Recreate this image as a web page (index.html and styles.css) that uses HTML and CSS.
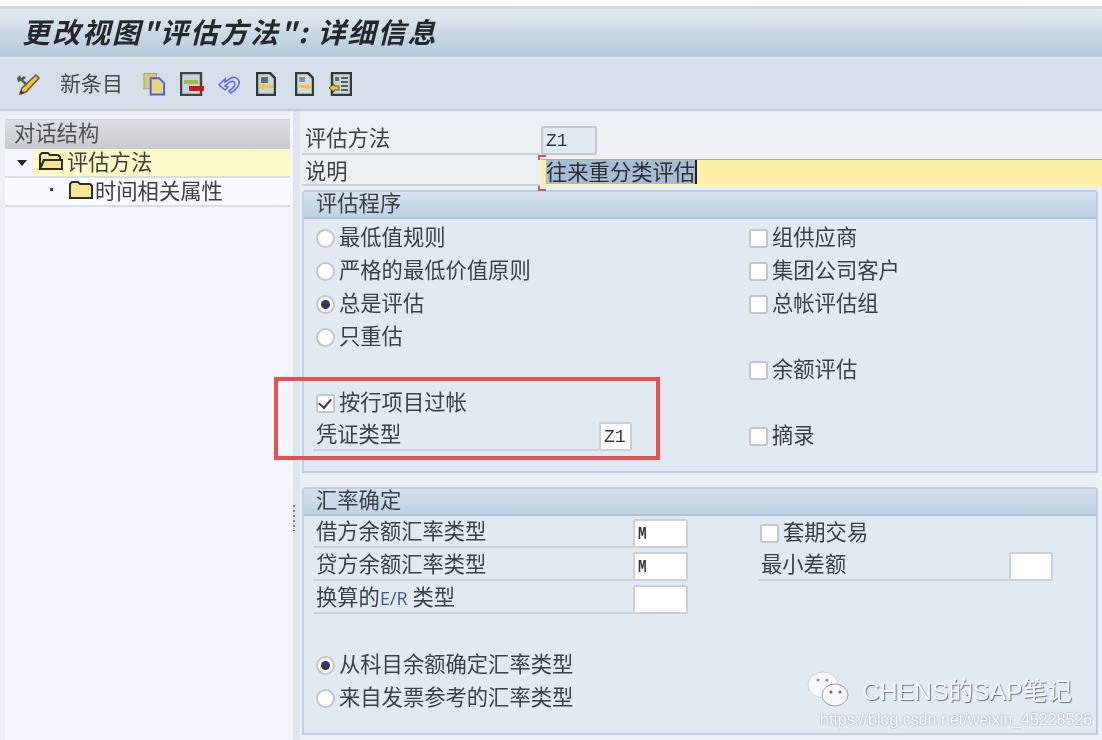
FILE: index.html
```html
<!DOCTYPE html>
<html>

	<head>
		<meta charset="UTF-8">
		<title>更改视图"评估方法": 详细信息</title>
		<link rel="stylesheet" href="styles.css">
	</head>

	<body>
		<div id="main">
			<div class="title">更改视图"评估方法": 详细信息</div>
			<div class="toolbar">
				<svg class="tool tool-pen" viewBox="0 0 24 24">
					<path d="M1 6l3-3 1 3 3-2 2 2-3 2 4 3-2 2-4-4-3 1z" fill="#55595c"/>
					<path d="M20 3l3 3-13 14-6 2 2-6z" fill="#f2c14e" stroke="#6b5a2c" stroke-width="1.5"/>
					<path d="M4 22l1-4 3 3z" fill="#333"/>
				</svg>
				<span class="tool-text">新条目</span>
				<svg class="tool tool-copy" viewBox="0 0 24 24">
					<rect x="1" y="1" width="13" height="16" fill="#d8c878" stroke="#a8a070"/>
					<path d="M8 6h9l5 5v12H8z" fill="#e6d67c" stroke="#5a5ae6" stroke-width="2"/>
				</svg>
				<svg class="tool tool-save" viewBox="0 0 25 24">
					<rect x="1" y="1" width="20" height="22" fill="#ccd3d7" stroke="#3f4446" stroke-width="2.5"/>
					<rect x="4" y="8" width="14" height="4" fill="#9cc04c"/>
					<rect x="9" y="14" width="15" height="5" rx="1" fill="#c8161c"/>
				</svg>
				<svg class="tool tool-undo" viewBox="0 0 24 24">
					<path d="M2 13l6-6v3l6-4c5-2 9 2 8 6-1 4-4 6-8 9l-2-2c3-2 6-4 6-7 0-3-3-3-5-2l-5 4 3 1-3 3z" fill="#dfe3f5" stroke="#6a6ad8" stroke-width="1.6"/>
				</svg>
				<svg class="tool tool-doc" viewBox="0 0 20 24">
					<path d="M1 1h13l5 5v17H1z" fill="#cdd3d6" stroke="#33383a" stroke-width="2.5"/>
					<path d="M5 5h7v6H5z" fill="#62696d"/>
					<path d="M2 15l6-4v2h9v3H8v2z" fill="#e8c93c"/>
				</svg>
				<svg class="tool tool-doc2" viewBox="0 0 19 24">
					<path d="M1 1h12l5 5v17H1z" fill="#d5dade" stroke="#33383a" stroke-width="2.5"/>
					<path d="M4 5h6v5H4z" fill="#8a9296"/>
					<path d="M17 15l-6-4v2H4v3h7v2z" fill="#e8c93c"/>
				</svg>
				<svg class="tool tool-list" viewBox="0 0 23 24">
					<rect x="3" y="1" width="19" height="22" fill="#cdd3d6" stroke="#33383a" stroke-width="2.5"/>
					<path d="M12 6h7M12 10h7M12 14h7M12 18h7" stroke="#5a6064" stroke-width="2"/>
					<rect x="6" y="5" width="4" height="4" fill="#62696d"/>
					<path d="M0 16l5-4v2h5v4H5v2z" fill="#e8c93c" stroke="#5c5420"/>
				</svg>
			</div>
			<div class="content">
				<div class="side">
					<div class="side-head">对话结构</div>
					<div class="tree-row tree-open">
						<span class="tree-arrow"></span>
						<span class="tree-sel">
							<svg class="folder" viewBox="0 0 25 20">
								<path d="M2 18V4l2-2h6l2 2h8l2 2v3H6l-4 9z" fill="#f8eeb0" stroke="#2f2f2a" stroke-width="2"/>
								<path d="M2 18l4-9h18v9z" fill="#f6e48c" stroke="#2f2f2a" stroke-width="2"/>
							</svg>
							评估方法
						</span>
					</div>
					<div class="tree-row tree-child">
						<span class="tree-dot"></span>
						<svg class="folder" viewBox="0 0 25 20">
							<path d="M2 18V4l2-2h6l2 2h10l2 2v12z" fill="#f7e795" stroke="#2f2f2a" stroke-width="2"/>
						</svg>
						时间相关属性
					</div>
				</div>
				<div class="splitter">
					<div class="grip"></div>
				</div>
				<div class="detail">
					<div class="field-line line-code">
						<div class="line-label">评估方法</div>
						<div class="input input-code">Z1</div>
					</div>
					<div class="field-line line-desc">
						<div class="line-label">说明</div>
						<div class="input-desc">
							<span class="corner corner-top"></span>
							<span class="selected">往来重分类评估</span>
							<span class="corner corner-bottom"></span>
						</div>
					</div>

					<div class="group group-one">
						<div class="group-head">评估程序</div>
						<div class="group-body">
							<div class="col-left">
								<div class="row"><span class="radio"></span>最低值规则</div>
								<div class="row"><span class="radio"></span>严格的最低价值原则</div>
								<div class="row"><span class="radio on"></span>总是评估</div>
								<div class="row"><span class="radio"></span>只重估</div>
								<div class="row"></div>
								<div class="row"><span class="check on"></span>按行项目过帐</div>
								<div class="row line">
									<div class="line-label">凭证类型</div>
									<div class="input input-mono w33">Z1</div>
								</div>
							</div>
							<div class="col-right">
								<div class="row"><span class="check"></span>组供应商</div>
								<div class="row"><span class="check"></span>集团公司客户</div>
								<div class="row"><span class="check"></span>总帐评估组</div>
								<div class="row"></div>
								<div class="row"><span class="check"></span>余额评估</div>
								<div class="row"></div>
								<div class="row"><span class="check"></span>摘录</div>
							</div>
						</div>
					</div>

					<div class="group group-two">
						<div class="group-head">汇率确定</div>
						<div class="group-body">
							<div class="col-left">
								<div class="row line">
									<div class="line-label">借方余额汇率类型</div>
									<div class="input input-mono w55"><b>M</b></div>
								</div>
								<div class="row line">
									<div class="line-label">贷方余额汇率类型</div>
									<div class="input input-mono w55"><b>M</b></div>
								</div>
								<div class="row line">
									<div class="line-label">换算的<span class="latin">E/R</span> 类型</div>
									<div class="input input-mono w55"></div>
								</div>
								<div class="row"></div>
								<div class="row"><span class="radio on"></span>从科目余额确定汇率类型</div>
								<div class="row"><span class="radio"></span>来自发票参考的汇率类型</div>
							</div>
							<div class="col-right">
								<div class="row"><span class="check"></span>套期交易</div>
								<div class="row line">
									<div class="line-label">最小差额</div>
									<div class="input input-mono w44"></div>
								</div>
							</div>
						</div>
					</div>
				</div>
			</div>
			<div class="red-box"></div>
			<div class="mark">
				<svg class="mark-icon" viewBox="0 0 42 38">
					<ellipse cx="16" cy="15" rx="15" ry="13" fill="#f7f9fc" stroke="#d0d5da"/>
					<ellipse cx="28" cy="25" rx="13" ry="11" fill="#f7f9fc" stroke="#9aa0a8"/>
					<circle cx="11" cy="10" r="1.6" fill="#8f969e"/>
					<circle cx="20" cy="10" r="1.6" fill="#8f969e"/>
					<circle cx="24" cy="22" r="1.5" fill="#666c74"/>
					<circle cx="33" cy="22" r="1.5" fill="#666c74"/>
				</svg>
				<span class="mark-text">CHENS的SAP笔记</span>
			</div>
			<div class="url">https://blog.csdn.net/weixin_45228526</div>
		</div>
	</body>

</html>
```

FILE: styles.css
```css
html, body {
	margin: 0;
	background-color: #fff;
}

#main {
	position: relative;
	width: 1102px;
	height: 740px;
	overflow: hidden;
	padding-top: 6px;
	box-sizing: border-box;
	background: #fff;
	color: #3c4145;
	font-family: "Noto Sans CJK SC", "Liberation Sans", sans-serif;
	font-size: 21.3px;
	filter: blur(.7px);
}

.title {
	height: 51px;
	line-height: 45px;
	box-sizing: border-box;
	padding-left: 22px;
	border-top: 3px solid #cfd8e1;
	background: linear-gradient(#e3ebf2, #b5c8da);
	color: #24282c;
	font-size: 28px;
	font-weight: bold;
	font-style: italic;
	letter-spacing: 2px;
}

.toolbar {
	display: flex;
	align-items: center;
	height: 54px;
	box-sizing: border-box;
	padding-left: 16px;
	background: #d4dfe9;
	border-top: 1px solid #e4ebf1;
	border-bottom: 2px solid #bfcbd6;
}

.tool {
	height: 24px;
	flex: none;
}

.tool-pen { width: 24px; }
.tool-text { margin-left: 20px; width: 63px; padding-bottom: 3px; font-size: 21px; white-space: nowrap; color: #44494d; }
.tool-copy { width: 23px; margin-left: 20px; }
.tool-save { width: 25px; margin-left: 14px; }
.tool-undo { width: 24px; margin-left: 12px; }
.tool-doc { width: 20px; margin-left: 15px; }
.tool-doc2 { width: 19px; margin-left: 19px; }
.tool-list { width: 23px; margin-left: 15px; }

.content {
	display: flex;
	height: 629px;
	background: #ebf0f5;
}

.side {
	width: 285px;
	margin: 8px 0 0 5px;
	background: #f3f6fc;
}

.side-head {
	height: 30px;
	line-height: 24px;
	padding-left: 9px;
	box-sizing: border-box;
	background: linear-gradient(#dcdfe2, #c6cbcf);
	border-top: 1px solid #d0d4d8;
	color: #4c5155;
}

.tree-row {
	display: flex;
	align-items: center;
	height: 29px;
	box-sizing: border-box;
	border-bottom: 2px solid #d6dfe8;
	white-space: nowrap;
}

.tree-open {
	padding-left: 12px;
}

.tree-arrow {
	width: 0;
	height: 0;
	border: 5px solid transparent;
	border-top: 6px solid #222;
	border-bottom: 0;
	flex: none;
}

.tree-sel {
	display: flex;
	align-items: center;
	flex: 1;
	height: 100%;
	box-sizing: border-box;
	margin-left: 6px;
	padding: 0 0 4px 5px;
	background: #fdfac8;
}

.tree-child {
	padding: 0 0 4px 45px;
	background: #fafbfe;
}

.tree-dot {
	width: 3px;
	height: 3px;
	background: #444;
	flex: none;
}

.tree-child .folder {
	margin: 0 2px 0 15px;
}

.folder {
	width: 25px;
	height: 20px;
	margin-right: 4px;
	flex: none;
}

.splitter {
	position: relative;
	width: 10px;
	background: linear-gradient(90deg, #f3f6fc 30%, #dfe5ec 30%);
}

.grip {
	position: absolute;
	left: 3px;
	top: 394px;
	width: 2px;
	height: 26px;
	background: repeating-linear-gradient(#7d8388 0 2px, transparent 2px 5px);
}

.detail {
	flex: 1;
	padding: 14px 4px 0 2px;
}

.field-line {
	display: flex;
	align-items: flex-end;
}

.line-code {
	height: 30px;
}

.line-desc {
	height: 31px;
}

.line-label {
	flex: 1;
	min-width: 0;
	height: 100%;
	box-sizing: border-box;
	padding-left: 3px;
	border-bottom: 2px solid #cdd1d5;
	line-height: 26px;
	white-space: nowrap;
}

.field-line .line-label {
	flex: none;
	width: 238px;
}

.line-code .line-label {
	line-height: 23px;
}

.line-desc .line-label {
	line-height: 30px;
}

.input {
	flex: none;
	height: 29px;
	box-sizing: border-box;
	border: 2px solid #ccd0d3;
	border-radius: 2px;
	background: #fff;
	font-family: "Liberation Mono", monospace;
	font-size: 18px;
	line-height: 27px;
	padding-left: 3px;
	color: #33373a;
	overflow: hidden;
}

.input b {
	display: inline-block;
	transform: scaleX(.8);
	transform-origin: left;
}

.input-code {
	width: 56px;
	margin-left: 1px;
	background: #e1eaf3;
	border-color: #c4c9cc;
}

.input-desc {
	position: relative;
	display: flex;
	align-items: flex-start;
	flex: 1;
	height: 27px;
	margin-left: 1px;
	padding-left: 5px;
	margin-right: -4px;
	background: #fdf0a8;
	border-top: 1px solid #b2ad8c;
	box-sizing: border-box;
	white-space: nowrap;
}

.selected {
	height: 24px;
	line-height: 22px;
	background: #a8bbd3;
	border-right: 2px solid #222;
	color: #2a2f36;
}

.corner {
	position: absolute;
	left: -3px;
	width: 8px;
	height: 5px;
	border-left: 2px solid #d6524a;
	box-sizing: border-box;
}

.corner-top {
	top: -5px;
	border-top: 2px solid #d6524a;
}

.corner-bottom {
	bottom: -5px;
	border-bottom: 2px solid #d6524a;
}

.group {
	margin-top: 4px;
	border: 2px solid #bccfe2;
	border-radius: 4px 4px 0 0;
	background: #e1eaf3;
	box-sizing: border-box;
}

.group-one {
	height: 283px;
}

.group-two {
	height: 248px;
	margin-top: 14px;
}

.group-head {
	height: 27px;
	line-height: 19px;
	padding-left: 12px;
	box-sizing: border-box;
	background: linear-gradient(#d6e2ee, #bfd1e3);
	border-bottom: 2px solid #aec3d8;
}

.group-body {
	display: grid;
	padding: 3px 0 0 9px;
}

.group-one .group-body {
	grid-template-columns: 436px 1fr;
}

.group-two .group-body {
	grid-template-columns: 445px 1fr;
	padding-top: 1px;
}

.group-one .col-left {
	width: 319px;
}

.group-two .col-left {
	width: 375px;
}

.group-two .col-right {
	width: 295px;
}

.row {
	display: flex;
	align-items: center;
	height: 33px;
	box-sizing: border-box;
	padding-bottom: 6px;
	white-space: nowrap;
}

.row.line {
	align-items: flex-end;
	padding-bottom: 2px;
}

.col-left .row > .radio,
.col-left .row > .check {
	margin-left: 3px;
}

.group-two .col-right .row > .check {
	margin-left: 2px;
}

.radio {
	width: 19px;
	height: 19px;
	margin-top: 6px;
	margin-right: 4px;
	box-sizing: border-box;
	border: 2px solid #c2c6ca;
	border-radius: 50%;
	background: #fff;
	flex: none;
	display: flex;
	align-items: center;
	justify-content: center;
}

.radio.on::after {
	content: "";
	width: 9px;
	height: 9px;
	border-radius: 50%;
	background: #34345c;
}

.check {
	position: relative;
	width: 19px;
	height: 19px;
	margin-top: 6px;
	margin-right: 4px;
	box-sizing: border-box;
	border: 2px solid #c2c6ca;
	border-radius: 3px;
	background: #fff;
	flex: none;
}

.check.on::after {
	content: "";
	position: absolute;
	left: 3px;
	top: 0;
	width: 6px;
	height: 10px;
	border: solid #34345c;
	border-width: 0 2px 2px 0;
	transform: rotate(40deg);
}

.w33 { width: 33px; }
.w44 { width: 44px; }
.w55 { width: 55px; }

.latin {
	font-family: "Open Sans", "Liberation Sans", sans-serif;
	font-size: 18px;
	color: #45597c;
}

.red-box {
	position: absolute;
	left: 274px;
	top: 377px;
	width: 386px;
	height: 83px;
	box-sizing: border-box;
	border: 4px solid #e8504f;
}

.mark {
	position: absolute;
	left: 807px;
	top: 670px;
	display: flex;
	align-items: center;
}

.mark-icon {
	width: 42px;
	height: 38px;
}

.mark-text {
	margin-left: 13px;
	font-family: "Liberation Sans", "Noto Sans CJK SC", sans-serif;
	font-size: 24.7px;
	color: #f4f7fa;
	text-shadow: 1px 1px 1px #70767c;
	white-space: nowrap;
}

.url {
	position: absolute;
	left: 820px;
	top: 711px;
	font-family: "Liberation Sans", sans-serif;
	font-size: 16px;
	color: #f4f7fa;
	text-shadow: 0 0 2px #8f979f;
	white-space: nowrap;
}
```
